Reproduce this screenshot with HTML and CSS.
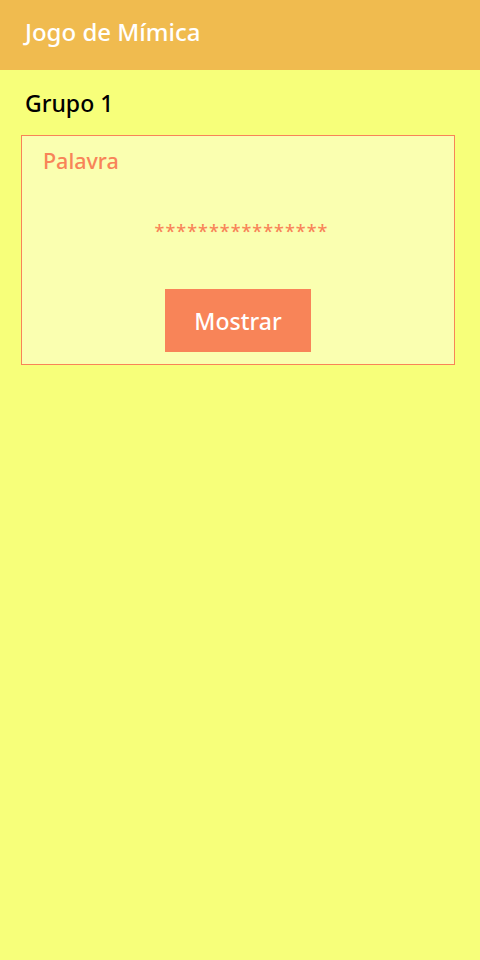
FILE: index.html
```html
<!DOCTYPE html>
<html lang="pt">
<head>
<meta charset="utf-8">
<link rel="stylesheet" href="styles.css">
</head>
<body>
<header class="appbar">
  <h1 class="appbar-title">Jogo de Mímica</h1>
</header>
<main class="content">
  <h2 class="group">Grupo 1</h2>
  <section class="card">
    <div class="card-label">Palavra</div>
    <div class="word">****************</div>
    <div class="actions">
      <button class="btn">Mostrar</button>
    </div>
  </section>
</main>
</body>
</html>
```
FILE: styles.css
```css
html, body {
  margin: 0;
  padding: 0;
  height: 100%;
}
body {
  background: #F7FF7A;
  font-family: "Noto Sans", "Open Sans", sans-serif;
}
.appbar {
  height: 70px;
  background: #F0BB4F;
  display: flex;
  align-items: center;
  padding: 0 25px;
  box-sizing: border-box;
}
.appbar-title {
  margin: 0;
  font-size: 24px;
  font-weight: 500;
  color: #ffffff;
  line-height: 1;
  position: relative;
  top: -3px;
}
.content {
  padding: 17px 25px 0 21px;
}
.group {
  margin: 0 0 16px 4px;
  font-size: 23px;
  font-weight: 500;
  color: #000;
  line-height: 32px;
}
.card {
  width: 434px;
  height: 230px;
  box-sizing: border-box;
  border: 1px solid #F88458;
  background: #FAFFB0;
  display: flex;
  flex-direction: column;
}
.card-label {
  margin: 11px 0 0 21px;
  font-size: 21.5px;
  font-weight: 500;
  color: #F88458;
  line-height: 28px;
}
.word {
  margin-top: 42px;
  padding-left: 7px;
  text-align: center;
  font-size: 18px;
  font-weight: 500;
  color: #F88458;
  letter-spacing: 1px;
  line-height: 28px;
}
.actions {
  display: flex;
  justify-content: center;
  margin-top: 44px;
}
.btn {
  width: 146px;
  height: 63px;
  border: none;
  background: #F88458;
  color: #fff;
  font-family: inherit;
  font-size: 23px;
  font-weight: 500;
  padding: 0;
}
```
